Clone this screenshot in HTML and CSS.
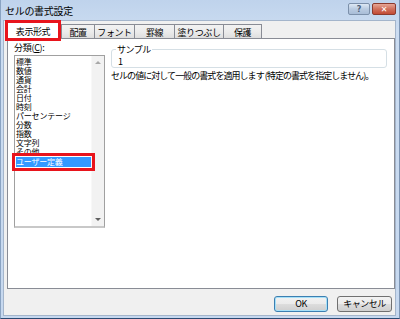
FILE: index.html
```html
<!DOCTYPE html>
<html lang="ja">
<head>
    <meta charset="UTF-8">
    <title>セルの書式設定</title>
    <link rel="stylesheet" href="styles.css">
</head>
<body>
    <div class="window">
        <div class="titlebar">
            <span class="title">セルの書式設定</span>
            <div class="caption-btns">
                <span class="cap help">?</span>
                <span class="cap close">✕</span>
            </div>
        </div>

        <div class="client">
            <div class="tabs">
                <div class="tab selected" style="width: 52px;">表示形式</div>
                <div class="tab" style="width: 34px;">配置</div>
                <div class="tab" style="width: 41px;">フォント</div>
                <div class="tab" style="width: 41px;">罫線</div>
                <div class="tab" style="width: 50px;">塗りつぶし</div>
                <div class="tab" style="width: 39px;">保護</div>
            </div>

            <div class="panel">
                <div class="left-col">
                    <div class="label">分類(<u>C</u>):</div>
                    <div class="listbox">
                        <ul class="items">
                            <li>標準</li>
                            <li>数値</li>
                            <li>通貨</li>
                            <li>会計</li>
                            <li>日付</li>
                            <li>時刻</li>
                            <li>パーセンテージ</li>
                            <li>分数</li>
                            <li>指数</li>
                            <li>文字列</li>
                            <li>その他</li>
                            <li class="selected">ユーザー定義</li>
                        </ul>
                        <div class="scrollbar">
                            <span class="arrow up"></span>
                            <span class="arrow down"></span>
                        </div>
                    </div>
                </div>

                <div class="right-col">
                    <fieldset class="sample">
                        <legend>サンプル</legend>
                        <div class="sample-value">1</div>
                    </fieldset>
                    <p class="desc">セルの値に対して一般の書式を適用します (特定の書式を指定しません)。</p>
                </div>
            </div>

            <div class="buttons">
                <button class="btn default">OK</button>
                <button class="btn">キャンセル</button>
            </div>
        </div>
    </div>
</body>
</html>
```

FILE: styles.css
```css
/* Base */
body {
    margin: 0;
    padding: 0;
    width: 400px;
    height: 319px;
    overflow: hidden;
    font-family: "Noto Sans CJK JP", "Noto Sans", sans-serif;
    font-size: 9px;
    color: #000;
    background: #c4d7ee;
}

.window {
    box-sizing: border-box;
    width: 400px;
    height: 319px;
    display: flex;
    flex-direction: column;
    background: linear-gradient(#bfd3ec, #cbdcf1 30px, #c6d8ef);
    border-left: 1px solid #8aa3c2;
    border-right: 1px solid #7d95b4;
    border-bottom: 1px solid #2a4a72;
    padding: 0 3px 2px 2px;
}

/* Title bar */
.titlebar {
    height: 20px;
    display: flex;
    align-items: center;
    justify-content: space-between;
    padding-left: 2px;
}

.title {
    font-size: 10px;
    letter-spacing: -0.3px;
}

.caption-btns {
    display: flex;
    gap: 2px;
    margin-bottom: 2px;
}

.cap {
    box-sizing: border-box;
    height: 12px;
    display: flex;
    align-items: center;
    justify-content: center;
    border-radius: 2px;
    font-family: "DejaVu Sans", sans-serif;
    font-size: 8px;
    font-weight: bold;
}

.help {
    width: 22px;
    border: 1px solid #7c90aa;
    background: linear-gradient(#dde8f4, #b9cbe1 50%, #a9bdd7);
    color: #4d5f78;
}

.close {
    width: 24px;
    border: 1px solid #8b3a2e;
    background: linear-gradient(#e7a696, #d0705c 50%, #c24a35);
    color: #fff;
}

/* Client area */
.client {
    flex: 1;
    display: flex;
    flex-direction: column;
    background: #f0f0f0;
    border: 1px solid #a4b5cb;
    padding: 1px 2px 0 3px;
}

/* Tabs */
.tabs {
    display: flex;
    align-items: flex-end;
    height: 17px;
    margin-bottom: -1px;
}

.tab {
    box-sizing: border-box;
    height: 15px;
    display: flex;
    align-items: center;
    justify-content: center;
    border: 1px solid #898c95;
    border-bottom: none;
    margin-left: -1px;
    background: linear-gradient(#f2f2f2, #ebebeb 50%, #dcdcdc);
    white-space: nowrap;
    letter-spacing: -0.4px;
}

.tab:nth-child(2) {
    margin-left: 2px;
}

.tab.selected {
    height: 17px;
    margin-left: 0;
    background: #fff;
    position: relative;
    z-index: 1;
    outline: 3px solid #e8141c;
    outline-offset: -1px;
}

/* Panel */
.panel {
    height: 251px;
    box-sizing: border-box;
    width: 388px;
    background: #fff;
    border: 1px solid #898c95;
    display: flex;
    gap: 6px;
    padding: 4px 6px 0 6px;
}

.left-col {
    width: 91px;
}

.label {
    height: 12px;
    line-height: 10px;
    letter-spacing: -0.3px;
}

.label u {
    text-decoration: underline;
}

.listbox {
    box-sizing: border-box;
    height: 173px;
    display: flex;
    border: 1px solid #a0a0a0;
    border-bottom: 2px solid #c8c8c8;
}

.items {
    flex: 1;
    list-style: none;
    margin: 0;
    padding: 1px 0 0 1px;
}

.items li {
    height: 9px;
    line-height: 9px;
    font-size: 8px;
    letter-spacing: -0.2px;
    white-space: nowrap;
}

.items li.selected {
    margin-top: 1px;
    height: 10px;
    line-height: 10px;
    background: #3399ff;
    color: #fff;
    position: relative;
    z-index: 1;
    outline: 3px solid #e8141c;
    outline-offset: 1px;
}

.scrollbar {
    width: 12px;
    display: flex;
    flex-direction: column;
    justify-content: space-between;
    align-items: center;
    background: #f2f2f2;
    border-left: 1px solid #f8f8f8;
    padding: 5px 0 5px;
}

.arrow {
    width: 0;
    height: 0;
    border-left: 3px solid transparent;
    border-right: 3px solid transparent;
}

.arrow.up {
    border-bottom: 3px solid #a8a8a8;
}

.arrow.down {
    border-top: 3px solid #606060;
}

/* Right column */
.right-col {
    flex: 1;
    padding-right: 1px;
}

.sample {
    margin: 2px 0 0 0;
    padding: 0 0 2px 6px;
    height: 19px;
    border: 1px solid #d5dfe5;
    border-radius: 3px;
}

.sample legend {
    padding: 0 1px;
    margin-left: -2px;
    line-height: 9px;
    letter-spacing: -0.5px;
}

.sample-value {
    line-height: 10px;
    padding-top: 3px;
}

.desc {
    margin: 3px 0 0 0;
    line-height: 10px;
    letter-spacing: -0.95px;
    white-space: nowrap;
}

/* Bottom buttons */
.buttons {
    display: flex;
    justify-content: flex-end;
    gap: 9px;
    padding: 7px 1px 0 0;
}

.btn {
    box-sizing: border-box;
    height: 16px;
    padding: 0;
    font-family: "Noto Sans CJK JP", sans-serif;
    font-size: 9px;
    line-height: 12px;
    border: 1px solid #707070;
    border-radius: 3px;
    background: linear-gradient(#f2f2f2, #ebebeb 50%, #dddddd 51%, #cfcfcf);
    width: 55px;
    letter-spacing: -0.5px;
}

.btn.default {
    width: 54px;
    border-color: #3c7fb1;
    box-shadow: inset 0 0 0 1px #a6e0f8;
}
```
